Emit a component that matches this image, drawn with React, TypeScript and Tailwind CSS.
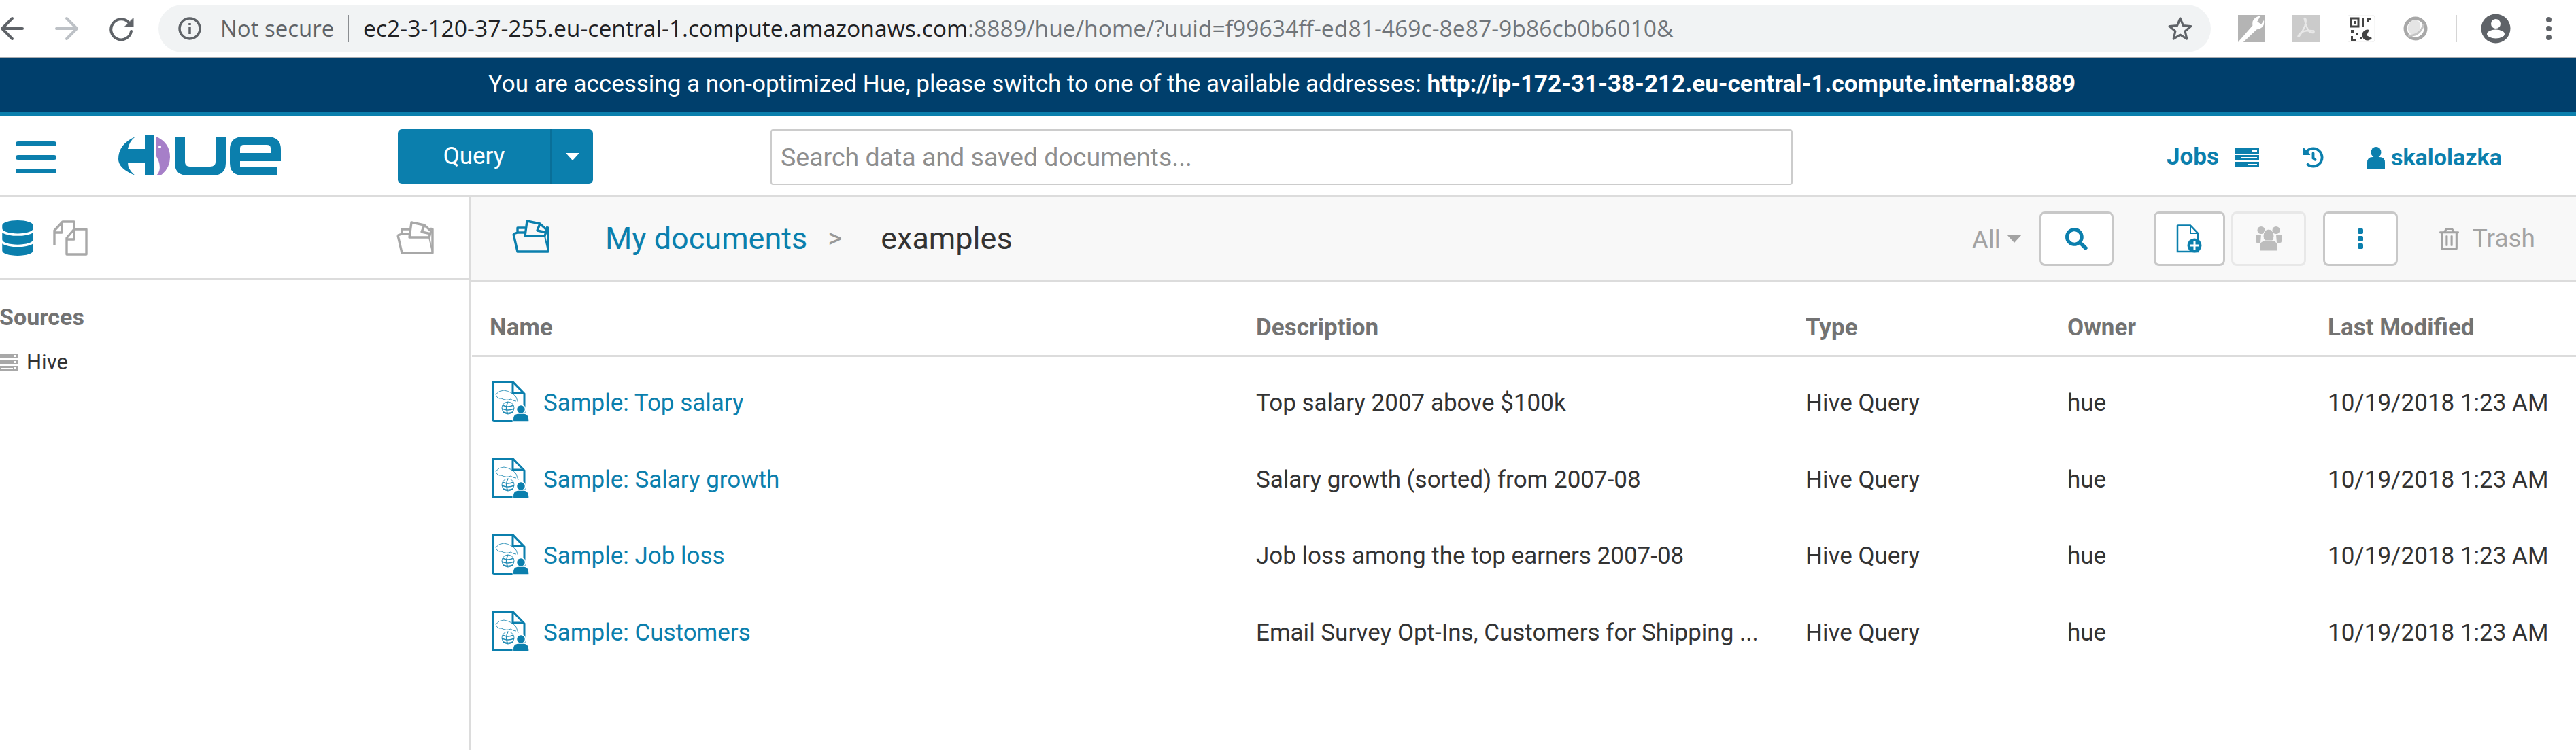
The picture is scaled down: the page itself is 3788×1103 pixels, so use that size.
import { FaDatabase, FaHistory, FaSearch, FaRegTrashAlt } from "react-icons/fa";

const rows = [
  ["Sample: Top salary", "Top salary 2007 above $100k"],
  ["Sample: Salary growth", "Salary growth (sorted) from 2007-08"],
  ["Sample: Job loss", "Job loss among the top earners 2007-08"],
  ["Sample: Customers", "Email Survey Opt-Ins, Customers for Shipping ..."],
];

function FolderDoc({ color }: { color: string }) {
  return (
    <svg width="56" height="50" viewBox="0 0 56 50" fill="none" stroke={color} strokeWidth="3.4" strokeLinejoin="round">
      <path d="M2 21 L8 47 H53 L53 12 L50 11" />
      <path d="M2 21 L8 19 V12 H19" />
      <path d="M8 19 H19" />
      <path d="M19 24 L22 2 L41 6 L51 15 L48 24 Z" />
      <path d="M41 6 L37 16 L51 19" />
      <path d="M48 24 L53 46" strokeWidth="2" />
    </svg>
  );
}

function DocIcon() {
  return (
    <svg width="56" height="60" viewBox="0 0 56 60" fill="none">
      <path d="M1.500 4 Q1.500 1.500 4 1.500 H31 L48 19 V56 Q48 58.500 46 58.500 H4 Q1.500 58.500 1.500 56 Z" stroke="#0b7fad" strokeWidth="3" />
      <path d="M31 2 V18 H48" stroke="#0b7fad" strokeWidth="3" />
      <path d="M6 20 Q11 14 18 14 Q30 16 36 24 L39 33 M6 20 Q8 27 14 26 Q22 30 28 27 M28 27 Q32 30 36 30" stroke="#0b7fad" strokeWidth="1" opacity="0.8" />
      <circle cx="24" cy="40" r="9" stroke="#0b7fad" strokeWidth="1" opacity="0.8" />
      <path d="M16 36 Q24 40 32 36 M15 41 Q24 45 33 41 M17 46 Q24 49 31 46 M24 31 Q19 40 24 49" stroke="#0b7fad" strokeWidth="1.400" opacity="0.9" />
      <circle cx="43" cy="42" r="6.500" fill="#0b7fad" stroke="#fff" strokeWidth="1.500" />
      <path d="M31.500 60 Q30 49 38 48 H48 Q56 49 55 60 Z" fill="#0b7fad" stroke="#fff" strokeWidth="1.500" />
    </svg>
  );
}

export default function App() {
  return (
    <div className="w-[3788px] h-[1103px] overflow-hidden bg-white flex flex-col font-['Roboto',sans-serif] text-[#333]">
      {/* Browser chrome */}
      <div className="h-[85px] shrink-0 flex items-center border-b border-[#a8abaf] pb-[1px]">
        <div className="w-[233px] shrink-0 h-full flex items-center">
          <svg width="200" height="36" viewBox="0 0 200 36" fill="none" strokeWidth="4" strokeLinecap="round" strokeLinejoin="round">
            <path d="M33 18 H4 M18 3 L3 18 L18 33" stroke="#5f6368" />
            <path d="M83 18 H112 M98 3 L113 18 L98 33" stroke="#bdc1c6" />
            <path d="M190 10 A15 15 0 1 0 193 22" stroke="#5f6368" />
            <path d="M196 3 V15 H184 Z" fill="#5f6368" stroke="#5f6368" strokeWidth="1" />
          </svg>
        </div>
        <div className="w-[3018px] h-[70px] rounded-full bg-[#f1f3f4] flex items-center font-['Open_Sans',sans-serif] text-[33.7px] whitespace-nowrap">
          <svg width="36" height="36" viewBox="0 0 36 36" fill="none" className="ml-[28px] shrink-0">
            <circle cx="18" cy="18" r="15" stroke="#5f6368" strokeWidth="3.500" />
            <path d="M18 16 V26 M18 10 V13" stroke="#5f6368" strokeWidth="3.500" />
          </svg>
          <span className="ml-[27px] text-[#5f6368] text-[33px] w-[187px]">Not secure</span>
          <span className="w-[2px] h-[40px] bg-[#8a8d91]" />
          <span className="ml-[21px] text-[#202124]">ec2-3-120-37-255.eu-central-1.compute.amazonaws.com<span className="text-[#70757a]">:8889/hue/home/?uuid=f99634ff-ed81-469c-8e87-9b86cb0b6010&amp;</span></span>
          <svg width="40" height="38" viewBox="0 0 24 24" fill="none" stroke="#5f6368" strokeWidth="2" strokeLinejoin="round" className="ml-auto mr-[25px] shrink-0">
            <path d="M12 2.500 L14.800 9.200 L22 9.800 L16.500 14.500 L18.200 21.500 L12 17.800 L5.800 21.500 L7.500 14.500 L2 9.800 L9.200 9.200 Z" />
          </svg>
        </div>
        <div className="flex-1 flex items-center">
          <svg width="40" height="40" viewBox="0 0 41 41" className="ml-[40px] shrink-0">
            <rect width="41" height="41" fill="#b4b4b4" />
            <path d="M0 41 L22 16 Q20 4 34 1 L29 10 L35 14 L39 8 Q41 20 28 22 L8 41 Z" fill="#fff" />
          </svg>
          <svg width="40" height="40" viewBox="0 0 41 41" fill="none" className="ml-[40px] shrink-0">
            <rect width="41" height="41" fill="#cbcbcb" />
            <path d="M18 5 Q22 5 19 16 Q15 26 10 32 Q7 34 11 28 Q18 22 32 24 Q34 28 26 26 Q21 20 18 5" stroke="#e8e8e8" strokeWidth="2.500" />
          </svg>
          <svg width="40" height="40" viewBox="0 2 40 40" className="ml-[41px] shrink-0">
            <rect x="0" y="2" width="40" height="40" rx="4" fill="#fff" stroke="#eee" />
            <rect x="5" y="7" width="11" height="12" fill="none" stroke="#444" strokeWidth="3" />
            <rect x="9" y="11" width="3" height="4" fill="#444" />
            <path d="M21 7 H24 V20 H21 Z M28 7 H35 V10 H31 V13 H28 Z M5 24 H10 V28 H5 Z M12 28 H15 V32 H12 Z M5 33 H8 V38 H13 V40 H5 Z M18 34 H22 V38 H18 Z" fill="#444" />
            <path d="M32 24 A8 8 0 1 0 36 36 L28 32 Z" fill="#444" />
          </svg>
          <svg width="36" height="36" viewBox="0 0 36 36" fill="none" className="ml-[42px] shrink-0">
            <circle cx="18" cy="18" r="15" stroke="#a8a8a8" strokeWidth="5" />
            <ellipse cx="16" cy="16" rx="9" ry="11" fill="#e4e4e4" transform="rotate(20 16 16)" />
            <path d="M7 28 Q24 30 30 12" stroke="#c4c4c4" strokeWidth="3" />
          </svg>
          <span className="ml-[41px] w-[2px] h-[40px] bg-[#d5d5d5]" />
          <svg width="44" height="44" viewBox="0 0 44 44" className="ml-[35px] shrink-0">
            <circle cx="22" cy="22" r="21.500" fill="#5f6368" />
            <circle cx="22" cy="15" r="7" fill="#fff" />
            <ellipse cx="22" cy="30" rx="13" ry="6.500" fill="#fff" />
          </svg>
          <span className="ml-[52px] flex flex-col gap-[5px]">
            <span className="w-[8px] h-[8px] rounded-full bg-[#5f6368]" />
            <span className="w-[8px] h-[8px] rounded-full bg-[#5f6368]" />
            <span className="w-[8px] h-[8px] rounded-full bg-[#5f6368]" />
          </span>
        </div>
      </div>

      {/* Banner */}
      <div className="h-[85px] shrink-0 bg-[#003f6c] border-b-[5px] border-[#0b7fad] flex items-center justify-center text-white text-[35px] pr-[18px] pb-[2px] whitespace-nowrap">
        <span>You are accessing a non-optimized Hue, please switch to one of the available addresses: <b className="font-bold">http://ip-172-31-38-212.eu-central-1.compute.internal:8889</b></span>
      </div>

      {/* Navbar */}
      <div className="h-[120px] shrink-0 border-b-[3px] border-[#dcdcdc] flex items-center">
        <div className="ml-[23px] w-[60px] flex flex-col gap-[13px] shrink-0 mt-[6px]">
          <span className="h-[7px] rounded-full bg-[#0b7fad]" />
          <span className="h-[7px] rounded-full bg-[#0b7fad]" />
          <span className="h-[7px] rounded-full bg-[#0b7fad]" />
        </div>
        <svg width="241" height="61" viewBox="0 0 241 61" className="ml-[90px] shrink-0">
          <path d="M26 3 Q1 14 1 36 Q1 50 26 60 Q15 52 15 41 H40 V60 H54 V1 L40 0 V21 H15 Q17 10 26 3 Z" fill="#0b7fad" />
          <path d="M57 3 Q77 12 77 33 Q77 50 63 60 H57 Q65 52 60 38 L57 32 Z" fill="#a67fc8" />
          <circle cx="62" cy="18" r="2" fill="#fff" />
          <path d="M84 3 H99 V40 Q99 47 106 47 H136 Q144 47 144 40 V3 H159 V42 Q159 60 139 60 H104 Q84 60 84 42 Z" fill="#0b7fad" />
          <path d="M165 22 Q165 3 185 3 H220 Q240 3 240 22 V39 H180 V47 H234 V60 H185 Q165 60 165 42 Z M180 27 H225 V20 Q225 15 219 15 H186 Q180 15 180 20 Z" fill="#0b7fad" fillRule="evenodd" />
        </svg>
        <div className="ml-[171px] w-[287px] h-[80px] rounded-[6px] bg-[#0b7fad] flex text-white text-[35px] shrink-0 mt-[3px]">
          <span className="w-[226px] flex items-center justify-center border-r-[2px] border-[#096f98]">Query</span>
          <span className="flex-1 flex items-center justify-center">
            <span className="border-x-[10px] border-x-transparent border-t-[11px] border-t-white" />
          </span>
        </div>
        <div className="ml-[261px] w-[1503px] h-[82px] border-[2px] border-[#ccc] rounded-[4px] flex items-center pl-[13px] text-[37.5px] text-[#8e8e8e] shrink-0 mt-[5px]">Search data and saved documents...</div>
        <div className="flex items-center text-[#0b7fad] font-bold text-[35px] whitespace-nowrap mt-[6px]">
          <span className="ml-[550px]">Jobs</span>
          <svg width="36" height="28" viewBox="0 0 36 28" className="ml-[23px]" fill="#0b7fad">
            <path d="M0 0 H36 V8 H0 Z M0 10 H36 V18 H0 Z M0 20 H36 V28 H0 Z" />
            <path d="M26 3 H33 V5 H26 Z M10 13 H33 V15 H10 Z M20 23 H33 V25 H20 Z" fill="#fff" />
          </svg>
          <FaHistory size={31} className="ml-[64px]" />
          <svg width="26" height="32" viewBox="0 0 26 32" className="ml-[64px]" fill="#0b7fad">
            <ellipse cx="13" cy="8" rx="7.500" ry="8" />
            <path d="M0 32 V23 Q0 15 8 15 H18 Q26 15 26 23 V32 Z" />
          </svg>
          <span className="ml-[9px] text-[34px]">skalolazka</span>
        </div>
      </div>

      {/* Body */}
      <div className="flex-1 flex min-h-0">
        <div className="w-[689px] shrink-0 border-r-[3px] border-[#dcdcdc] box-content">
          <div className="h-[122px] border-b-[3px] border-[#dcdcdc] flex items-center">
            <FaDatabase size={52} color="#0b7fad" className="ml-[0px]" />
            <svg width="52" height="52" viewBox="0 0 52 52" fill="none" stroke="#a8a8a8" strokeWidth="3.400" strokeLinejoin="round" className="ml-[26px]">
              <path d="M2 36 V15 L14 2 H31 V20" />
              <path d="M2 18 H13 V3" />
              <path d="M20 50 V26 L31 13 H49 V50 Z" fill="#fff" />
              <path d="M20 28 H31 V14" />
            </svg>
            <span className="ml-auto mr-[50px]"><FolderDoc color="#a8a8a8" /></span>
          </div>
          <div className="mt-[37px] ml-[-1px] text-[34px] font-bold text-[#737373] leading-[34px]">Sources</div>
          <div className="mt-[33px] ml-[-1px] flex items-center text-[31px] leading-[34px]">
            <svg width="27" height="26" viewBox="0 0 27 26" fill="#a8a8a8">
              <path d="M0 0 H27 V7 H0 Z M0 9 H27 V16 H0 Z M0 18 H27 V25 H0 Z" />
              <path d="M2 3 H20 V4 H2 Z M22 2 H25 V5 H22 Z M2 12 H20 V13 H2 Z M22 11 H25 V14 H22 Z M2 21 H20 V22 H2 Z M22 20 H25 V23 H22 Z" fill="#fff" />
            </svg>
            <span className="ml-[13px]">Hive</span>
          </div>
        </div>
        <div className="flex-1 min-w-0">
          <div className="h-[124px] bg-[#f8f8f8] border-b-[2px] border-[#dcdcdc] flex items-center pr-[60px] whitespace-nowrap">
            <span className="ml-[61px] mt-[-6px]"><FolderDoc color="#0b7fad" /></span>
            <span className="ml-[81px] text-[#0b7fad] text-[45px]">My documents</span>
            <span className="ml-[30px] text-[#999] text-[40px]">&gt;</span>
            <span className="ml-[57px] text-[45px] text-[#333]">examples</span>
            <span className="ml-auto text-[#a3a3a3] text-[37px] leading-none mt-[2px]">All</span>
            <span className="ml-[9px] border-x-[11px] border-x-transparent border-t-[12px] border-t-[#a3a3a3]" />
            <span className="ml-[26px] w-[109px] h-[80px] rounded-[8px] bg-white border-[3px] border-[#c8c8c8] flex items-center justify-center shrink-0">
              <FaSearch size={33} color="#0b7fad" />
            </span>
            <span className="ml-[59px] w-[105px] h-[80px] rounded-[8px] bg-white border-[3px] border-[#c8c8c8] flex items-center justify-center shrink-0">
              <svg width="38" height="42" viewBox="0 0 38 42" fill="none">
                <path d="M3 1.500 H21 L32 13 V40 H2 V2 Z" stroke="#0b7fad" strokeWidth="2.500" />
                <path d="M21 2 V13 H32" stroke="#0b7fad" strokeWidth="2" />
                <circle cx="27" cy="31" r="10.500" fill="#0b7fad" />
                <path d="M27 24 V38 M20 31 H34" stroke="#fff" strokeWidth="3" />
              </svg>
            </span>
            <span className="ml-[9px] w-[110px] h-[80px] rounded-[8px] bg-[#f9f9f9] border-[3px] border-[#e8e8e8] flex items-center justify-center shrink-0">
              <svg width="38" height="36" viewBox="0 0 38 36" fill="#bdbdbd">
                <circle cx="8" cy="5.500" r="5.500" />
                <circle cx="30" cy="5.500" r="5.500" />
                <path d="M0 12 H8 L7 24 H2 Q0 24 0 22 Z M38 12 H30 L31 24 H36 Q38 24 38 22 Z" />
                <ellipse cx="19" cy="14" rx="8" ry="10" stroke="#f9f9f9" strokeWidth="1" />
                <path d="M6 36 V29 Q6 21 14 21 H24 Q32 21 32 29 V36 Z" stroke="#f9f9f9" strokeWidth="1" />
              </svg>
            </span>
            <span className="ml-[25px] w-[110px] h-[80px] rounded-[8px] bg-white border-[3px] border-[#c8c8c8] flex flex-col items-center justify-center gap-[3px] shrink-0">
              <span className="w-[8px] h-[8px] rounded-[2px] bg-[#0b7fad]" />
              <span className="w-[8px] h-[8px] rounded-[2px] bg-[#0b7fad]" />
              <span className="w-[8px] h-[8px] rounded-[2px] bg-[#0b7fad]" />
            </span>
            <FaRegTrashAlt size={33} color="#a3a3a3" className="ml-[59px] shrink-0" />
            <span className="ml-[18px] text-[#a3a3a3] text-[37px]">Trash</span>
          </div>

          <div className="ml-[2px] mt-[48px] grid grid-cols-[1127px_808px_385px_383px_1fr] pl-[26px] text-[35px] font-bold text-[#737373] border-b-[3px] border-[#dcdcdc] h-[63px] whitespace-nowrap leading-[40px]">
            <span>Name</span>
            <span>Description</span>
            <span>Type</span>
            <span>Owner</span>
            <span>Last Modified</span>
          </div>
          <div className="ml-[2px] pt-[12px]">
            {rows.map(([name, desc]) => (
              <div key={name} className="h-[112.5px] grid grid-cols-[1127px_808px_385px_383px_1fr] pl-[26px] items-center text-[35px] whitespace-nowrap">
                <div className="flex items-center text-[#0b7fad]">
                  <span className="ml-[3px] shrink-0 mt-[-6px]"><DocIcon /></span>
                  <span className="ml-[20px]">{name}</span>
                </div>
                <span>{desc}</span>
                <span>Hive Query</span>
                <span>hue</span>
                <span>10/19/2018 1:23 AM</span>
              </div>
            ))}
          </div>
        </div>
      </div>
    </div>
  );
}
